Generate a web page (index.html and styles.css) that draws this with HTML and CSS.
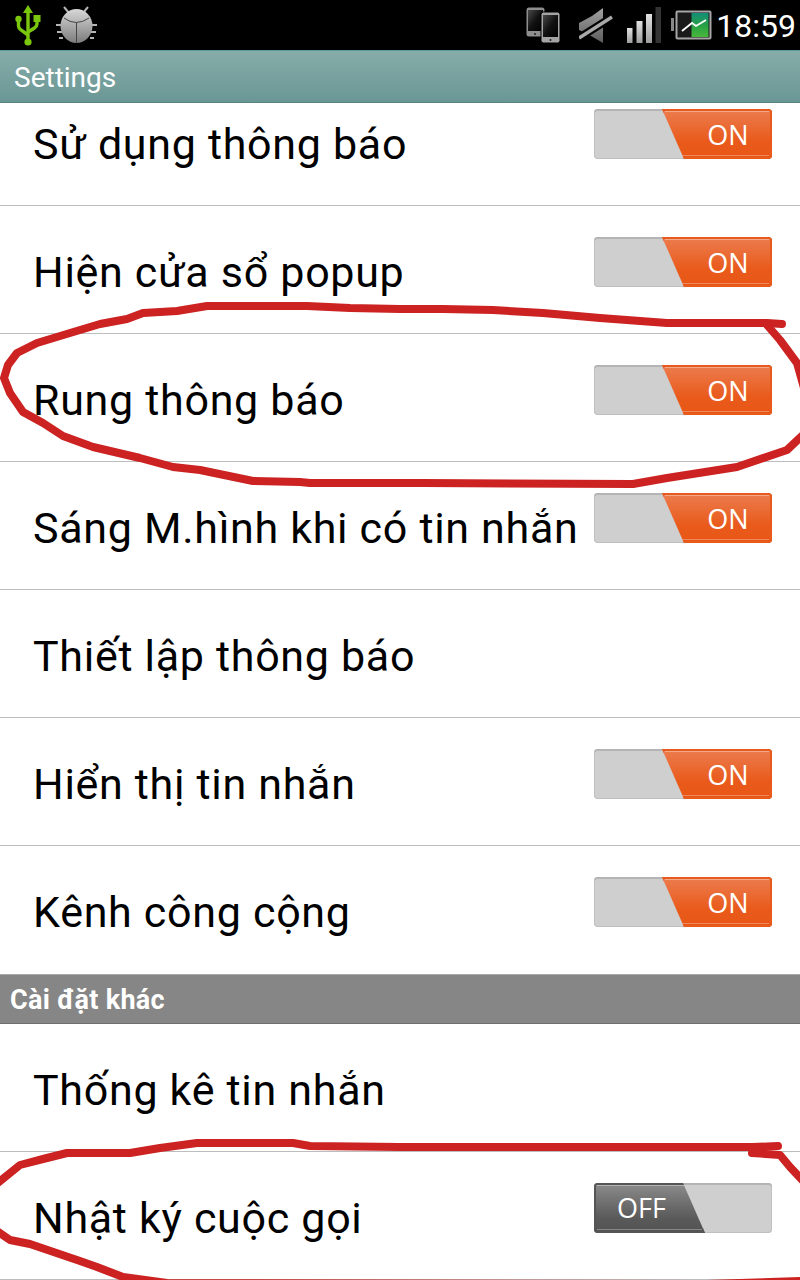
FILE: index.html
```html
<!DOCTYPE html>
<html lang="vi">
<head>
  <meta charset="UTF-8">
  <title>Settings</title>
  <link rel="stylesheet" href="styles.css">
</head>
<body>
  <div class="screen">
    <div class="status-bar">
      <!-- usb -->
      <svg class="icon-usb" width="28" height="42" viewBox="14 4 28 42">
        <g fill="none" stroke="#7ac70e" stroke-width="3.4">
          <path d="M28 10V41"/>
          <path d="M18.5 20V26Q18.5 28 21 30L28 35"/>
          <path d="M37 20V24Q37 26 34.500 28L28 32"/>
        </g>
        <g fill="#7ac70e">
          <path d="M28 5L33 13H23Z"/>
          <circle cx="28" cy="42" r="3.600"/>
          <circle cx="18.500" cy="19" r="3.200"/>
          <rect x="33.500" y="15" width="7" height="7"/>
        </g>
      </svg>
      <!-- debug -->
      <svg class="icon-bug" width="42" height="40" viewBox="56 5 42 40">
        <defs>
          <linearGradient id="bugGrad" x1="0" y1="0" x2="0" y2="1">
            <stop offset="0" stop-color="#d8d8d8"/>
            <stop offset="1" stop-color="#7c7c7c"/>
          </linearGradient>
        </defs>
        <g stroke="#b4b4b4" stroke-width="2" fill="none">
          <path d="M64 7L69 13M88 7L83 13"/>
          <path d="M56 25H62M57 32H62M59 38H63M97 25H91M96 32H91M94 38H90"/>
        </g>
        <ellipse cx="76.500" cy="26" rx="16" ry="17" fill="url(#bugGrad)"/>
        <path d="M64 18Q76 27 89 18M76.500 23V43" fill="none" stroke="#444" stroke-width="1"/>
      </svg>
      <div class="status-right">
        <!-- two phones -->
        <svg class="icon-phones" width="35" height="38" viewBox="526 6 35 38">
          <defs>
            <linearGradient id="phoneGrad" x1="0" y1="0" x2="1" y2="1">
              <stop offset="0" stop-color="#4a4a4a"/>
              <stop offset="0.5" stop-color="#111"/>
              <stop offset="1" stop-color="#000"/>
            </linearGradient>
          </defs>
          <rect x="526.500" y="7.500" width="18" height="29" rx="2.500" fill="#8e8e8e"/>
          <rect x="528" y="10" width="15" height="21" fill="url(#phoneGrad)"/>
          <circle cx="535" cy="34" r="1" fill="#222"/>
          <rect x="541" y="12" width="19" height="31" rx="2.500" fill="#a4a4a4" stroke="#000" stroke-width="1"/>
          <rect x="543" y="15" width="15" height="22" fill="url(#phoneGrad)"/>
          <circle cx="550.500" cy="40" r="1" fill="#222"/>
        </svg>
        <!-- muted speaker -->
        <svg class="icon-mute" width="34" height="37" viewBox="579 7 34 37">
          <defs>
            <linearGradient id="muteGrad" x1="0" y1="0" x2="0" y2="1">
              <stop offset="0" stop-color="#a2a2a2"/>
              <stop offset="1" stop-color="#5c5c5c"/>
            </linearGradient>
          </defs>
          <path d="M603 8V43L591 36L579 30V23L592 16Z" fill="url(#muteGrad)"/>
          <path d="M574 41L617 14" stroke="#000" stroke-width="8"/>
          <path d="M579 38L612 17" stroke="#a8a8a8" stroke-width="3.500"/>
        </svg>
        <!-- signal -->
        <svg class="icon-signal" width="37" height="38" viewBox="625 6 37 38">
          <defs>
            <linearGradient id="barGrad" x1="0" y1="0" x2="0" y2="1">
              <stop offset="0" stop-color="#e2e2e2"/>
              <stop offset="1" stop-color="#9e9e9e"/>
            </linearGradient>
          </defs>
          <rect x="627" y="28" width="5.500" height="15" fill="url(#barGrad)"/>
          <rect x="636.500" y="21" width="6" height="22" fill="url(#barGrad)"/>
          <rect x="646" y="14" width="6" height="29" fill="url(#barGrad)"/>
          <rect x="655.500" y="7" width="5.500" height="36" fill="#333"/>
        </svg>
        <!-- battery -->
        <svg class="icon-battery" width="42" height="30" viewBox="670 10 42 30">
          <defs>
            <linearGradient id="batGrad" x1="0" y1="0" x2="0" y2="1">
              <stop offset="0" stop-color="#138d78"/>
              <stop offset="0.5" stop-color="#26a046"/>
              <stop offset="1" stop-color="#48b83a"/>
            </linearGradient>
          </defs>
          <rect x="671" y="18" width="3" height="13" fill="#888"/>
          <rect x="676.500" y="11.500" width="34" height="27" rx="1" fill="#1a1a1a" stroke="#a6a6a6" stroke-width="2"/>
          <rect x="691.500" y="13" width="17" height="24" fill="url(#batGrad)"/>
          <path d="M682 31L692 23L696 26L706 20" fill="none" stroke="#fff" stroke-width="1.800"/>
        </svg>
        <span class="clock">18:59</span>
      </div>
    </div>

    <div class="title-bar">Settings</div>

    <div class="content">
      <div class="list">
        <div class="row">
          <span class="row-label">Sử dụng thông báo</span>
          <div class="toggle on"><div class="thumb">ON</div></div>
        </div>
        <div class="row">
          <span class="row-label">Hiện cửa sổ popup</span>
          <div class="toggle on"><div class="thumb">ON</div></div>
        </div>
        <div class="row">
          <span class="row-label">Rung thông báo</span>
          <div class="toggle on"><div class="thumb">ON</div></div>
        </div>
        <div class="row">
          <span class="row-label">Sáng M.hình khi có tin nhắn</span>
          <div class="toggle on"><div class="thumb">ON</div></div>
        </div>
        <div class="row">
          <span class="row-label">Thiết lập thông báo</span>
        </div>
        <div class="row">
          <span class="row-label">Hiển thị tin nhắn</span>
          <div class="toggle on"><div class="thumb">ON</div></div>
        </div>
        <div class="row no-line">
          <span class="row-label">Kênh công cộng</span>
          <div class="toggle on"><div class="thumb">ON</div></div>
        </div>
        <div class="section-head">Cài đặt khác</div>
        <div class="row">
          <span class="row-label">Thống kê tin nhắn</span>
        </div>
        <div class="row">
          <span class="row-label">Nhật ký cuộc gọi</span>
          <div class="toggle off"><div class="thumb">OFF</div></div>
        </div>
      </div>
    </div>

    <!-- red marker scribbles on top of the screenshot -->
    <svg class="scribble" width="800" height="1280" viewBox="0 0 800 1280">
      <path d="M782 324L767 323L667 323L600 318L543 313L493 310L443 309L400 309L350 308L307 306L207 306L177 311L143 313L127 319L100 324L70 333L37 343L17 353L8 365L4 378L10 393L23 412L43 423L63 436L93 447L140 458L173 467L200 470L253 481L300 482L310 483L423 483L633 484L667 478L737 467L787 450L806 432"/>
      <path d="M767 325L780 340L797 363L806 395"/>
      <path d="M778 1146L753 1147L400 1147L310 1146L293 1143L197 1143L160 1148L130 1153L67 1153L43 1159L20 1165L-6 1186"/>
      <path d="M752 1153L780 1155L790 1167L806 1184"/>
      <path d="M-6 1229L10 1240L30 1244L80 1261L97 1267L123 1277L167 1283L707 1284L800 1281"/>
    </svg>
  </div>
</body>
</html>
```

FILE: styles.css
```css
html, body { margin: 0; padding: 0; background: #fff; }
body { font-family: Roboto, "Noto Sans", sans-serif; color: #000; }
.screen { position: relative; width: 800px; height: 1280px; overflow: hidden; background: #fff; }

.status-bar { display: flex; align-items: flex-start; height: 50px; background: #000; padding-left: 14px; box-sizing: border-box; }
.status-bar svg { display: block; flex: none; }
.icon-usb { margin-top: 4px; }
.icon-bug { margin-top: 5px; margin-left: 14px; }
.status-right { display: flex; align-items: flex-start; margin-left: auto; }
.icon-phones { margin-top: 6px; }
.icon-mute { margin-top: 7px; margin-left: 18px; }
.icon-signal { margin-top: 6px; margin-left: 12px; }
.icon-battery { margin-top: 10px; margin-left: 8px; }
.clock { color: #fff; font-size: 32px; line-height: 52px; margin-left: 4px; margin-right: 4px; }

.title-bar {
  height: 53px;
  box-sizing: border-box;
  padding-left: 14px;
  font-size: 28px;
  line-height: 53px;
  color: #fff;
  background: linear-gradient(#86aca9, #6a9795);
  border-top: 1px solid #5b9c9e;
  border-bottom: 1px solid #5a8481;
}

.content { height: 1177px; overflow: hidden; }
.list { margin-top: -25px; }

.row {
  display: flex;
  justify-content: space-between;
  align-items: center;
  height: 128px;
  box-sizing: border-box;
  padding: 4px 28px 0 33px;
  border-bottom: 1px solid #bdbdbd;
}
.row.no-line { border-bottom: none; }
.row-label { font-size: 43px; letter-spacing: 0.7px; white-space: nowrap; }

.toggle {
  align-self: flex-start;
  display: flex;
  width: 178px;
  height: 50px;
  margin-top: 27px;
  flex: none;
  background: #cfcfcf;
  border-radius: 4px;
  box-shadow: inset 0 2px 0 #b4b4b4, inset 0 0 0 1px #c0c0c0;
  overflow: hidden;
}
.toggle.on { justify-content: flex-end; }
.thumb {
  position: relative;
  height: 100%;
  box-sizing: border-box;
  color: #fff;
  font-family: "Open Sans", sans-serif;
  font-size: 27px;
  line-height: 52px;
  text-align: center;
}
/* thin lighter line inside the thumb edge */
.thumb::before {
  content: "";
  position: absolute;
  left: 3px;
  right: 3px;
  top: 2px;
  bottom: 3px;
  border-top: 1px solid rgba(255, 255, 255, 0.35);
  border-bottom: 1px solid rgba(255, 255, 255, 0.3);
}
.on .thumb {
  width: 110px;
  padding-left: 22px;
  background: linear-gradient(#ec7d50, #e95a1b 65%, #e85614);
  box-shadow: inset 0 0 0 2px #e85a1c;
  clip-path: polygon(0 0, 100% 0, 100% 100%, 22px 100%);
}
.off .thumb {
  width: 111px;
  padding-right: 16px;
  line-height: 50px;
  background: linear-gradient(#8c8c8c, #5a5a5a 70%, #525252);
  box-shadow: inset 0 0 0 2px #555;
  clip-path: polygon(0 0, 89px 0, 100% 100%, 0 100%);
}

.section-head {
  height: 50px;
  box-sizing: border-box;
  padding-left: 10px;
  font-size: 27px;
  font-weight: 700;
  letter-spacing: 0.3px;
  line-height: 50px;
  color: #fff;
  background: #868686;
  border-top: 1px solid #aaa;
  border-bottom: 1px solid #6e6e6e;
}

.scribble { position: absolute; left: 0; top: 0; fill: none; stroke: #cc2222; stroke-width: 8; stroke-linecap: round; stroke-linejoin: round; }
```
